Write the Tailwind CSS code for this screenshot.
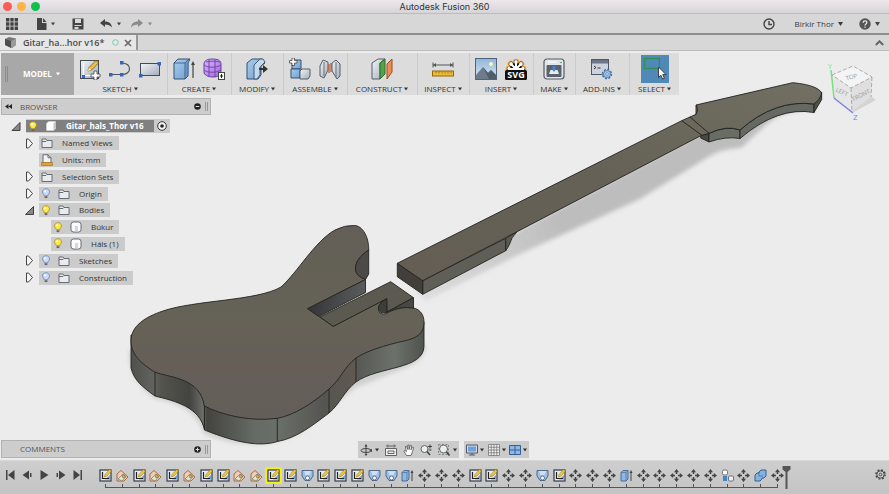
<!DOCTYPE html>
<html lang="en">
<head>
  <meta charset="UTF-8">
  <title>Autodesk Fusion 360</title>
  <script src="https://cdn.jsdelivr.net/npm/@tailwindcss/browser@4"></script>
</head>
<body class="h-screen flex flex-col overflow-hidden bg-[#ececec] font-['Open_Sans',sans-serif] text-[8px] leading-[12px] font-medium text-[#333]">

  <!-- icon sprite -->
  <svg class="absolute size-0" xmlns="http://www.w3.org/2000/svg">
    <defs>
      <linearGradient id="gBlue" x1="0" y1="0" x2="1" y2="1"><stop offset="0" stop-color="#a9cdee"/><stop offset="1" stop-color="#6f9fd0"/></linearGradient>
      <linearGradient id="gGrey" x1="0" y1="0" x2="1" y2="1"><stop offset="0" stop-color="#f2f4f7"/><stop offset="1" stop-color="#a4adbb"/></linearGradient>
      <linearGradient id="gPic" x1="0" y1="0" x2="0" y2="1"><stop offset="0" stop-color="#8fb6dc"/><stop offset="1" stop-color="#dbe8f2"/></linearGradient>
      <linearGradient id="gForm" x1="0" y1="0" x2="1" y2="1"><stop offset="0" stop-color="#dcb8fa"/><stop offset="1" stop-color="#a066dc"/></linearGradient>
    </defs>

    <symbol id="caret" viewBox="0 0 5 4"><path d="M0 0h5L2.500 4z" fill="currentColor"/></symbol>

    <symbol id="sketch" viewBox="0 0 22 22">
      <rect x="1.500" y="2.500" width="18" height="18" fill="url(#gGrey)" stroke="#444b55"/>
      <path d="M4.500 5v12.500H16" fill="none" stroke="#fff" stroke-width="1"/>
      <path d="M3 17h3v3H3z" fill="#3465c0"/>
      <path d="M9 13l1-3.500 7-7 2.500 2.500-7 7z" fill="#f3c13c" stroke="#6b551c" stroke-width=".8"/>
      <path d="M9 13l1-3 2 2z" fill="#fff"/>
      <path d="M15 13h3v3h3v3h-3v3h-3v-3h-3v-3h3z" fill="#fff" stroke="#444" stroke-width=".8"/>
    </symbol>
    <symbol id="spline" viewBox="0 0 22 22">
      <path d="M2 16.500h12M13 5c10 0 10 11.500 0 11.500" fill="none" stroke="#50555c" stroke-width="1.200"/>
      <g fill="#3465c0"><rect x="0" y="15" width="3.500" height="3.500"/><rect x="11" y="15" width="3.500" height="3.500"/><rect x="11" y="3" width="3.500" height="3.500"/></g>
    </symbol>
    <symbol id="rect" viewBox="0 0 22 22">
      <rect x="1.500" y="5.500" width="19" height="12" fill="url(#gGrey)" stroke="#444b55"/>
      <g fill="#3465c0"><rect x="0" y="16" width="3.500" height="3.500"/><rect x="18.500" y="4" width="3.500" height="3.500"/></g>
    </symbol>
    <symbol id="extrude" viewBox="0 0 22 22">
      <path d="M1 5l4-4h12l-2 4v13l-3 3H1z" fill="url(#gBlue)" stroke="#37516e"/>
      <path d="M1 5h11l4-4M12 5v16" fill="none" stroke="#37516e" stroke-width=".8"/>
      <path d="M12 5l4-3v13l-4 5z" fill="#4f80b5" fill-opacity=".5"/>
      <path d="M20 20V5" stroke="#444" stroke-width="1.200"/><path d="M18 7l2-4 2 4z" fill="#444"/>
    </symbol>
    <symbol id="form" viewBox="0 0 22 22">
      <path d="M1 6c0-3 3-5 8-5s9 1 9 5v7c0 4-3 6-8 6s-9-2-9-5z" fill="url(#gForm)" stroke="#6b3fa8"/>
      <path d="M1 7c4 3 12 3 17 0M1 12c4 3 12 3 17 0M6 1.500v16.500M12 1.500V19M3 4c4-1 10-1 14 0" fill="none" stroke="#6b3fa8" stroke-width=".9"/>
      <rect x="15.500" y="14.500" width="6" height="7" fill="#fff" stroke="#444"/><path d="M18.500 16v4M17 18h3" stroke="#222"/>
    </symbol>
    <symbol id="press" viewBox="0 0 22 22">
      <path d="M1 5l5-4h10l3 4-4 3v9l-3 4H1z" fill="url(#gBlue)" stroke="#37516e"/>
      <path d="M8 7l6-6h3l2 3-5 5v8l-3 4H8z" fill="#c5d9ec" stroke="#37516e" stroke-width=".9"/>
      <path d="M13 10h4V7l5 4-5 4v-3h-4z" fill="#333"/>
    </symbol>
    <symbol id="component" viewBox="0 0 22 22">
      <path d="M3 4l2-2h7v9H3z" fill="url(#gBlue)" stroke="#37516e"/>
      <path d="M2 11h9v9H2z" fill="url(#gBlue)" stroke="#37516e"/>
      <path d="M11 13l2-2h8v7l-2 3h-8z" fill="url(#gGrey)" stroke="#555e6b"/>
      <path d="M3 0h2.500v2.500H8V5H5.500v2.500H3V5H.500V2.500H3z" fill="#fff" stroke="#444" stroke-width=".8"/>
    </symbol>
    <symbol id="joint" viewBox="0 0 22 22">
      <path d="M1 8l3-6 5 2v8l-4 8-4-2z" fill="url(#gGrey)" stroke="#555e6b"/>
      <path d="M13 5l4-3 4 4v12l-3 3-5-8z" fill="url(#gGrey)" stroke="#555e6b"/>
      <path d="M10 6v9M12 5v9" stroke="#b4582c" stroke-width="1.200"/><path d="M5 4v14M17 4v15" stroke="#6a7380"/>
    </symbol>
    <symbol id="plane" viewBox="0 0 22 22">
      <path d="M1 5l6-4h7L9 5v16H1z" fill="url(#gGrey)" stroke="#555e6b"/>
      <path d="M9 5l5-4v15l-5 5z" fill="#4ea64a" stroke="#2d6a2c"/>
      <path d="M16 6l5-5v13l-5 7z" fill="#ee8c55" stroke="#9b4e22"/>
    </symbol>
    <symbol id="measure" viewBox="0 0 22 22">
      <path d="M1 7h20M1 4.500v5M21 4.500v5" stroke="#50555c"/><path d="M1 7l3-2v4zM21 7l-3-2v4z" fill="#50555c"/>
      <rect x=".500" y="13" width="21" height="5" fill="#eebb33" stroke="#8f6a12"/>
      <path d="M4 13v2.500M7 13v2.500M10 13v2.500M13 13v2.500M16 13v2.500M19 13v2.500" stroke="#8f6a12" stroke-width=".8"/>
    </symbol>
    <symbol id="picture" viewBox="0 0 22 22">
      <rect x=".500" y=".500" width="21" height="21" fill="url(#gPic)" stroke="#50647a"/>
      <circle cx="16" cy="6" r="2" fill="#fff6b8"/>
      <path d="M1 17l7-8 5 6 3-3 5 5v4H1z" fill="#6d7b8a"/><path d="M8 9l5 6 3-3 5 5v4h-7z" fill="#505d6b"/>
    </symbol>
    <symbol id="svglogo" viewBox="0 0 22 22">
      <g stroke="#f7a02b" stroke-width="6.500" stroke-linecap="round"><path d="M11 11V4M11 11L6 6M11 11l5-5M11 11H4M11 11h7"/></g>
      <g stroke="#111" stroke-width="4.500" stroke-linecap="round"><path d="M11 11V4M11 11L6 6M11 11l5-5M11 11H4M11 11h7"/></g>
      <g stroke="#fff" stroke-width="2" stroke-linecap="round"><path d="M11 11V4M11 11L6 6M11 11l5-5M11 11H4M11 11h7"/></g>
      <g fill="#fff"><circle cx="11" cy="4" r="1.900"/><circle cx="6" cy="6" r="1.900"/><circle cx="16" cy="6" r="1.900"/><circle cx="4" cy="10.500" r="1.700"/><circle cx="18" cy="10.500" r="1.700"/></g>
      <rect x="0" y="12" width="22" height="10" rx="1.500" fill="#111"/>
    </symbol>
    <symbol id="make" viewBox="0 0 22 22">
      <rect x="1" y="1" width="20" height="20" rx="3" fill="#e2e5e9" stroke="#555b63" stroke-width="1.200"/>
      <rect x="3.500" y="7" width="15" height="12" rx="1" fill="#5a626c"/><path d="M6 16l1.500-4h7l1.500 4z" fill="#e8ecf0"/>
      <path d="M9.500 8h3v4L11 14l-1.500-2z" fill="#3d86d6"/><path d="M5 4h9" stroke="#fff"/>
      <circle cx="18" cy="4.500" r=".8" fill="#35a050"/>
    </symbol>
    <symbol id="addins" viewBox="0 0 22 22">
      <rect x=".500" y="1.500" width="17" height="15" fill="#cdd3dd" stroke="#4e5766"/><rect x="1" y="2" width="16" height="3.500" fill="#6b7688"/>
      <path d="M3 8l2 1.500L3 11M6.500 10h3" stroke="#333" fill="none"/>
      <circle cx="16" cy="16" r="4.500" fill="#aac9ea" stroke="#3f6ea4" stroke-width="1.400" stroke-dasharray="2 1.500"/>
      <circle cx="16" cy="16" r="3.500" fill="#aac9ea" stroke="#3f6ea4" stroke-width=".8"/><circle cx="16" cy="16" r="1.300" fill="#fff" stroke="#3f6ea4" stroke-width=".7"/>
    </symbol>
    <symbol id="select" viewBox="0 0 28 28">
      <rect x="3.500" y="3.500" width="15" height="10" fill="none" stroke="#2f8f4e" stroke-width="1.200"/>
      <path d="M17.500 12v10.500l2.400-2.200 1.700 3.700 1.800-.8-1.700-3.600h3.300z" fill="#fff" stroke="#333" stroke-width=".9"/>
    </symbol>

    <symbol id="bulbOn" viewBox="0 0 10 12"><path d="M5 .800C2.500.800 1.200 2.500 1.200 4.300c0 1.800 1.800 2.500 2 4.200h3.600c.2-1.700 2-2.400 2-4.200C8.800 2.500 7.500.800 5 .800z" fill="#ffe84d" stroke="#a98d18" stroke-width=".9"/><path d="M3.500 9h3v2h-3z" fill="#666"/><circle cx="4" cy="3.500" r="1" fill="#fff"/></symbol>
    <symbol id="bulbOff" viewBox="0 0 10 12"><path d="M5 .800C2.500.800 1.200 2.500 1.200 4.300c0 1.800 1.800 2.500 2 4.200h3.600c.2-1.700 2-2.400 2-4.200C8.800 2.500 7.500.800 5 .800z" fill="#c9dcfa" stroke="#6b83b5" stroke-width=".9"/><path d="M3.500 9h3v2h-3z" fill="#666"/><circle cx="4" cy="3.500" r="1" fill="#fff"/></symbol>
    <symbol id="folder" viewBox="0 0 12 12"><path d="M1 2h4l1 1.500h5V10.500H1z" fill="#e9ebee" stroke="#5a6068" stroke-width=".9"/><path d="M1 4.500h4l1-1" fill="none" stroke="#5a6068" stroke-width=".9"/></symbol>
    <symbol id="units" viewBox="0 0 12 12"><path d="M2 .800h5l3 3V9H2z" fill="#f4f4f4" stroke="#5a6068" stroke-width=".9"/><path d="M7 .800v3h3" fill="none" stroke="#5a6068" stroke-width=".9"/><path d="M.500 8.500h11v3H.500z" fill="#e3a32e" stroke="#996a14" stroke-width=".6"/></symbol>
    <symbol id="body" viewBox="0 0 12 12"><rect x="1" y="1" width="10" height="10" rx="2.500" fill="#fbfbfc" stroke="#5a6068" stroke-width=".9"/><path d="M5 5h3v5.500H5z" fill="#d3d6dc"/></symbol>
    <symbol id="cube" viewBox="0 0 12 12"><path d="M1 3.500L3.500 1H11v7.500L8.500 11H1z" fill="#fff" stroke="#777" stroke-width=".7"/><path d="M8.500 3.500L11 1v7.500L8.500 11z" fill="#c4c6ca"/></symbol>
    <symbol id="closed" viewBox="0 0 9 11"><path d="M1.500 1h2l4 4.500-4 4.500h-2z" fill="#f6f6f6" stroke="#444"/></symbol>
    <symbol id="open" viewBox="0 0 9 11"><path d="M8.500 1.500v8h-8z" fill="#888" stroke="#333" stroke-width=".9"/></symbol>

    <symbol id="tSketch" viewBox="0 0 13 13"><rect x="1" y="1" width="11" height="11" fill="#e3ebf5" stroke="#333a45" stroke-width="1.200"/><path d="M6 10.500h5V6z" fill="#6fa2d8"/><path d="M3.500 3v6.500H10" fill="none" stroke="#222" stroke-width="1.200"/><path d="M5.500 8l.5-2.500 4.500-5L12.500 2 8 7z" fill="#f4c82e" stroke="#8a6c14" stroke-width=".5"/></symbol>
    <symbol id="tPlane" viewBox="0 0 13 13"><path d="M1 12V5l4-3.500L12 8l-4 4z" fill="#f2cdb0" stroke="#a3603c" stroke-width=".9"/><path d="M2 10l5-5 3 2.500L6 12z" fill="#dfe6d8" stroke="#6d7b62" stroke-width=".7"/><path d="M6 7l2-1.500L9.500 8 7 9z" fill="#e8b040" stroke="#555" stroke-width=".5"/></symbol>
    <symbol id="tHole" viewBox="0 0 13 13"><path d="M1 1.500h11v5.500l-3 4.500H4L1 7z" fill="#9dbfe6" stroke="#43617f" stroke-width=".9"/><path d="M3 2h7L8.500 6h-4z" fill="#cfe0f3"/><circle cx="6.500" cy="9" r="2" fill="#fff" stroke="#43617f" stroke-width=".8"/></symbol>
    <symbol id="tExtrude" viewBox="0 0 13 13"><path d="M1 3.500L3 1.500h5v8.500L6 12H1z" fill="#8db8e4" stroke="#3d6391" stroke-width=".9"/><path d="M1 3.500h5L8 1.500M6 3.500V12" fill="none" stroke="#3d6391" stroke-width=".6"/><path d="M11 12V3" stroke="#444"/><path d="M9.500 4L11 1l1.500 3z" fill="#444"/></symbol>
    <symbol id="tMove" viewBox="0 0 13 13"><path d="M6.500 2v3M6.500 8v3M2 6.500h3M8 6.500h3" stroke="#444" stroke-width="1.500"/><path d="M6.500 0L9 3.200H4zM6.500 13L9 9.800H4zM0 6.500L3.200 4v5zM13 6.500L9.800 4v5z" fill="#444"/></symbol>
    <symbol id="tJoint" viewBox="0 0 13 13"><rect x="1.500" y="1" width="5" height="5" rx="1.500" fill="#fff" stroke="#666" stroke-width=".9"/><rect x="7.500" y="7" width="5" height="5" rx="1" fill="#eee" stroke="#666" stroke-width=".9"/><rect x="2" y="7" width="4" height="5" fill="#3e86c8"/></symbol>
    <symbol id="tCombine" viewBox="0 0 13 13"><path d="M5 3l2-2h5v6l-2 2H8v1l-2 2H1V6l2-2h2z" fill="#86b2e2" stroke="#345f94"/><path d="M5 3v4h4" fill="none" stroke="#345f94" stroke-width=".6"/></symbol>
  </svg>

  <!-- title bar -->
  <header class="relative h-[14px] shrink-0 flex items-center justify-center border-b border-[#bdbabd] bg-linear-to-b from-[#ebe7eb] to-[#d8d5d8]">
    <div class="absolute left-[3px] flex gap-[5px]">
      <button aria-label="Close" class="size-[9px] rounded-full bg-[#fc5b57]"></button>
      <button aria-label="Minimize" class="size-[9px] rounded-full bg-[#fdb447]"></button>
      <button aria-label="Zoom" class="size-[9px] rounded-full bg-[#10bf4c]"></button>
    </div>
    <h1 class="font-['Inter',sans-serif] text-[9px] font-normal text-[#333]">Autodesk Fusion 360</h1>
  </header>

  <!-- quick access bar -->
  <div class="h-[21px] shrink-0 flex items-center justify-between border-b-2 border-[#8e8e8e] bg-[#d7d7d7] pl-[6px] pr-[9px] text-[#444]">
    <div class="flex items-center">
      <button aria-label="Data panel"><svg class="size-[12px]" viewBox="0 0 12 12" fill="currentColor"><path d="M0 0h3.400v3.400H0zM4.300 0h3.400v3.400H4.300zM8.600 0H12v3.400H8.600zM0 4.300h3.400v3.400H0zM4.300 4.300h3.400v3.400H4.300zM8.600 4.300H12v3.400H8.600zM0 8.600h3.400V12H0zM4.300 8.600h3.400V12H4.300zM8.600 8.600H12V12H8.600z"/></svg></button>
      <button aria-label="File" class="ml-[18px] flex items-center gap-1"><svg class="w-[11px] h-[12px]" viewBox="0 0 11 12" fill="currentColor"><path d="M1 0h5v5h4.500v7H1zM7 0l3.500 4H7z"/></svg><svg class="w-[4px] h-[4px]"><use href="#caret"/></svg></button>
      <button aria-label="Save" class="ml-[17px]"><svg class="size-[12px]" viewBox="0 0 12 12"><path d="M.500.500h11v11H.500z" fill="#444"/><path d="M3 1h6v4H3zM2.500 7h7v1h-7zM2.500 9h4v2h-4z" fill="#d7d7d7"/></svg></button>
      <button aria-label="Undo" class="ml-[16px] flex items-center gap-[5px]"><svg class="w-[12px] h-[9px]" viewBox="0 0 12 9"><path d="M5 0v2.500c4 0 6.500 2 7 6C10.500 6.500 8 5.500 5 5.500V8L0 4z" fill="#444"/></svg><svg class="w-[4px] h-[4px]"><use href="#caret"/></svg></button>
      <button aria-label="Redo" class="ml-[10px] flex items-center gap-[5px] text-[#8a8a8a]"><svg class="w-[12px] h-[9px]" viewBox="0 0 12 9"><path d="M7 0v2.500c-4 0-6.500 2-7 6C1.500 6.500 4 5.500 7 5.500V8l5-4z" fill="currentColor"/></svg><svg class="w-[4px] h-[4px]"><use href="#caret"/></svg></button>
    </div>
    <div class="flex items-center">
      <button aria-label="Job status"><svg class="size-[12px]" viewBox="0 0 12 12" fill="none" stroke="#444" stroke-width="1.400"><circle cx="6" cy="6" r="5"/><path d="M6 3v3.500h3"/></svg></button>
      <button class="ml-[20px] flex items-center gap-1 text-[#3a3a3a]">Birkir Thor <svg class="w-[5px] h-[4px]"><use href="#caret"/></svg></button>
      <button aria-label="Help" class="ml-[16px] flex items-center gap-1"><svg class="size-[12px]" viewBox="0 0 12 12"><circle cx="6" cy="6" r="5.700" fill="#555"/><path d="M4.200 4.700c0-2.400 3.700-2.300 3.700-.1C7.900 6 6 6 6 7.400M6 8.400v1.300" fill="none" stroke="#e6e6e6" stroke-width="1.300"/></svg><svg class="w-[5px] h-[4px]"><use href="#caret"/></svg></button>
    </div>
  </div>

  <!-- document tabs -->
  <div class="h-[16px] shrink-0 flex items-center justify-between border-b border-[#bcbcbc] bg-[#d7d7d7] pr-[5px]">
    <div class="h-full w-[138px] flex items-center border-r-2 border-[#999] bg-[#e6e6e6] pl-[5px]">
      <svg class="size-[11px]" viewBox="0 0 11 11"><path d="M0 2l4-2 7 1.500V8l-4 3-7-3z" fill="#777"/><path d="M0 2l6 2v7L0 8z" fill="#4e4e4e"/><path d="M6 4l5-2.500V8l-5 3z" fill="#999"/></svg>
      <span class="ml-[7px] w-[89px] text-[9px] font-semibold text-[#4a4a4a]">Gitar_ha...hor v16*</span>
      <svg class="size-[7px]" viewBox="0 0 7 7"><circle cx="3.500" cy="3.500" r="2.800" fill="none" stroke="#7cc9ae"/></svg>
      <button aria-label="Close tab" class="ml-[5px]"><svg class="size-[8px]" viewBox="0 0 8 8" stroke="#666" stroke-width="1.600"><path d="M1 1l6 6M7 1L1 7"/></svg></button>
    </div>
    <button aria-label="Collapse ribbon"><svg class="w-[9px] h-[6px]" viewBox="0 0 9 6" fill="none" stroke="#666" stroke-width="2"><path d="M.800 5l3.700-3.700L8.200 5"/></svg></button>
  </div>

  <!-- canvas -->
  <main class="relative flex-1 min-h-0 flex flex-col items-start">

    <svg class="absolute inset-0 size-full" viewBox="0 51 889 409" role="img" aria-label="Guitar body and neck">
      <defs>
        <linearGradient id="top" x1="0" y1="0" x2="0" y2="1"><stop offset="0" stop-color="#635f57"/><stop offset=".5" stop-color="#656256"/><stop offset=".75" stop-color="#655f58"/><stop offset="1" stop-color="#635e58"/></linearGradient>
        <linearGradient id="neck" x1="0" y1="1" x2="1" y2="0"><stop offset="0" stop-color="#645e55"/><stop offset=".5" stop-color="#656156"/><stop offset="1" stop-color="#717063"/></linearGradient>
        <linearGradient id="side" gradientUnits="userSpaceOnUse" x1="131" y1="0" x2="424" y2="0">
          <stop offset="0" stop-color="#50504d"/><stop offset=".08" stop-color="#62645f"/><stop offset=".1" stop-color="#55554f"/><stop offset=".2" stop-color="#43433f"/><stop offset=".245" stop-color="#6a6c66"/>
          <stop offset=".26" stop-color="#44443f"/><stop offset=".42" stop-color="#656a64"/><stop offset=".5" stop-color="#6a6f69"/><stop offset=".66" stop-color="#555550"/><stop offset=".76" stop-color="#5e5951"/><stop offset=".78" stop-color="#585a56"/><stop offset=".9" stop-color="#6c716b"/><stop offset="1" stop-color="#50524d"/>
        </linearGradient>
        <linearGradient id="pocket" x1="0" y1="0" x2="1" y2="0"><stop offset="0" stop-color="#35353a"/><stop offset="1" stop-color="#5a5c5b"/></linearGradient>
        <linearGradient id="shadow" gradientUnits="userSpaceOnUse" x1="420" y1="295" x2="560" y2="220"><stop offset="0" stop-color="#dedede"/><stop offset="1" stop-color="#bdbdbd"/></linearGradient>
        <filter id="soft" x="-5%" y="-5%" width="110%" height="110%"><feGaussianBlur stdDeviation="2"/></filter>
      </defs>

      <!-- ground shadows -->
      <path d="M412 288L426 301L520 254L640 199L700 162Q722 147 741 148Q756 133 772 120Q790 108 815 110L815 100L700 134L516 232L423 292z" fill="url(#shadow)" filter="url(#soft)"/>
      <path d="M129 350Q128 380 155 399Q195 405 204 434Q255 455 300 433L355 388L410 366Q424 360 426 345z" fill="#cfcfcf" filter="url(#soft)"/>

      <!-- body -->
      <g stroke="#22221f" stroke-width=".9" stroke-linejoin="round">
        <path d="M131 335V368C134 381 144 388 155 396C175 401 200 407 204.500 430C237 443 260 447 277.500 441.500C297 438 313 425 329 413C340 404 344 391 356 382C378 366 424 370 424 346V322z" fill="url(#side)"/>
        <path d="M353.500 225.500C363 225 369 238 368.700 250C360 256 355 262 355.500 270Q358 276 365.500 279.500L307.700 308.700L333.300 326.300L386.500 298.700Q376 306 379 312Q383 316 388 312.500Q400 306.500 408 307.500C420 307 424 315 424 322C424 333 418 338 404 341C386 345 366 351 356 358C344 367 341 379 329 389C312 404 294 415 277.500 418.300C250 422 222 415 204.300 406C200 378 172 378 155 372.300C142 364 131 355 131 341C131 326 145 317 163 311C195 300 257 301 281 287C297 273 315 241 335 230Q345 225 353.500 225.500z" fill="url(#top)"/>
        <path d="M155 372v24M204.500 406v24M277.300 418v23.500M329 389v24M356 358v24" fill="none"/>
        <path d="M368.700 250V274L365.500 279.500Q356 276 355.500 270C355 262 360 256 368.700 250z" fill="#4b4a46"/>
        <path d="M365.500 279.500V292.500L319 316.500L307.700 308.700z" fill="url(#pocket)"/>
        <path d="M320 317L390.700 281.700L413.500 297.700L387 312L386.700 298.700L333.300 326.300z" fill="#5c5a50"/>
        <path d="M387 312L413.500 297.700V308Q400 306 387 312z" fill="#4a4842"/>
        <path d="M386.700 298.700V313Q377 314 378.700 306Q381 301 386.700 298.700z" fill="#3d3d3a"/>
      </g>

      <!-- neck -->
      <g stroke="#22221f" stroke-width=".9" stroke-linejoin="round">
        <path d="M422.700 280.700L505.700 238.300V250.700L422.700 294.300z" fill="#5f5f58"/>
        <path d="M505.700 238.300L517 231.700Q511 238 510 243Q508 248 505.700 250.700z" fill="#5a5a52"/>
        <path d="M397.300 263.300L422.700 280.700V294.300L397.300 276.700z" fill="#423f3a"/>
        <path d="M700.700 135.700L709 133.300V142L700.700 138z" fill="#484843"/>
        <path d="M709 133.300Q727 125 740 130V138.500Q726 136 709 142z" fill="#6a6d66"/>
        <path d="M740 130Q775 99 814 104V112.500Q778 106 740 138.500z" fill="#666862"/>
        <path d="M814 104L821.700 92V99.500L814 112.500z" fill="#4f4f49"/>
        <path d="M397.300 263.300L681.700 120.700L696 114.300V105L792.700 82.700Q807 84 815 87.500Q822 91 821.500 94Q820 100 814 104Q775 99 740 130Q727 125 709 133.300L700.700 135.700L517 231.700L422.700 280.700z" fill="url(#neck)"/>
        <path d="M681.700 120.700L702 135.300M690 117L709 133.300M696.500 105Q699 110 696 114.300" fill="none"/>
      </g>
    </svg>

    <!-- view cube -->
    <svg class="absolute right-[9px] top-[9px] w-[56px] h-[62px]" viewBox="824 60 56 62" font-family="Open Sans" role="img" aria-label="View cube">
      <path d="M834 99L852 113L876 100L868 94z" fill="#d4d4d4"/>
      <path d="M832 75L853 66L872 77L851 88z" fill="#f4f4f4"/><path d="M832 75L851 88L852 111L834 98z" fill="#e6e6e6"/><path d="M851 88L872 77L871 97L852 111z" fill="#dfdfdf"/>
      <path d="M832 75L853 66L872 77L851 88zM851 88L852 111M872 77L871 97" fill="none" stroke="#a5a5a5" stroke-width=".9" stroke-dasharray="4 2"/>
      <path d="M831 70L834 98" stroke="#74e37c" stroke-width="1.500"/><path d="M834 98L853 113" stroke="#7f7fe6" stroke-width="1.300"/>
      <text x="828" y="69" font-size="7" fill="#74e37c">Y</text><text x="853" y="120" font-size="8" fill="#7f7fe6">Z</text>
      <g fill="#999" font-size="6" text-anchor="middle"><text x="852" y="79" transform="rotate(-14 852 79)">TOP</text><text x="841" y="94" transform="rotate(25 841 94)">LEFT</text><text x="862" y="97" transform="rotate(-28 862 97)">FRONT</text></g>
    </svg>

    <!-- ribbon -->
    <nav class="relative mt-[2px] ml-[1px] h-[42px] flex bg-[#dcdcdc]">
      <button class="w-[73px] flex items-center bg-[#a8a8a8] pl-[4px] font-bold text-white">
        <span class="h-[16px] w-[3px] border-x border-[#8b8b8b]"></span>
        <span class="ml-[15px]">MODEL</span>
        <svg class="ml-1 w-[4px] h-[4px]"><use href="#caret"/></svg>
      </button>
      <div id="ribbon" class="flex"></div>
    </nav>

    <!-- browser -->
    <section class="relative mt-[3px] w-[211px] pl-[1px]">
      <h2 class="h-[17px] flex items-center border border-[#b2b2b2] bg-[#cdcdcd] pl-[3px] pr-[2px] text-[#555]">
        <button aria-label="Collapse browser"><svg class="w-[7px] h-[5px]" viewBox="0 0 7 5"><path d="M3.500 0v5L0 2.500zM7 0v5L3.500 2.500z" fill="#222"/></svg></button>
        <span class="ml-[8px] flex-1">BROWSER</span>
        <svg class="size-[7px]" viewBox="0 0 7 7"><circle cx="3.500" cy="3.500" r="3.300" fill="#222"/><path d="M1.700 3.500h3.600" stroke="#ddd"/></svg>
        <span class="ml-[4px] h-[9px] w-[3px] border-x border-[#999]"></span>
      </h2>
      <ul id="tree" class="mt-[3px] h-[168px] grid grid-rows-10 items-center"></ul>
    </section>

    <!-- bottom panels -->
    <section class="relative mt-auto mb-[2px] w-full flex items-end">
      <div class="w-[211px] pl-[1px]">
        <h2 class="h-[18px] flex items-center border border-[#b2b2b2] bg-[#cdcdcd] pl-[18px] pr-[2px] text-[#555]">
          <span class="flex-1">COMMENTS</span>
          <button aria-label="Add comment"><svg class="size-[7px]" viewBox="0 0 7 7"><circle cx="3.500" cy="3.500" r="3.300" fill="#222"/><path d="M1.700 3.500h3.600M3.500 1.700v3.600" stroke="#ddd"/></svg></button>
          <span class="ml-[4px] h-[9px] w-[3px] border-x border-[#999]"></span>
        </h2>
      </div>
      <div class="ml-[147px] h-[17px] w-[101px] flex items-center justify-between bg-[#cbcbcb] px-[2px] text-[#333]">
        <button aria-label="Orbit" class="flex items-center gap-[3px]"><svg class="size-[12px]" viewBox="0 0 12 12" fill="none" stroke="#444"><path d="M6 1v10"/><ellipse cx="6" cy="6.500" rx="5" ry="2"/><path d="M6 0l1.500 2.500h-3zM6 12l1.500-2h-3zM9 6l3-1v3z" fill="#444" stroke="none"/></svg><svg class="w-[4px] h-[4px]"><use href="#caret"/></svg></button>
        <button aria-label="Look at"><svg class="size-[12px]" viewBox="0 0 12 12" fill="none" stroke="#555"><path d="M.500 4.500h11v7H.500zM3 7h6v2.500H3z" fill="#eee" stroke-width=".9"/><path d="M2 2h8M3 .500L1.500 2 3 3.500M9 .500L10.500 2 9 3.500" stroke-width=".9"/></svg></button>
        <button aria-label="Pan"><svg class="size-[12px]" viewBox="0 0 12 12"><path d="M3.500 11.500L.800 7l1-.8 1.700 1.500L2.300 2.500l1.200-.3 1.300 3.300V1h1.300v4.500L7.300 1.300l1.200.3-.5 4.200 1.500-2.800 1.200.5L9 9l-1 2.500z" fill="#fff" stroke="#555" stroke-width=".8"/></svg></button>
        <button aria-label="Zoom"><svg class="size-[12px]" viewBox="0 0 12 12"><circle cx="4.500" cy="5" r="3.500" fill="#e8f0f0" stroke="#666"/><path d="M7 7.500l3 3.500" stroke="#444" stroke-width="1.600"/><path d="M8 2.500h4M10 .500v4M8.500 6h3" stroke="#333" stroke-width=".9"/></svg></button>
        <button aria-label="Fit" class="flex items-center gap-[3px]"><svg class="size-[12px]" viewBox="0 0 12 12"><path d="M.500.500h10v10H.500z" fill="none" stroke="#888" stroke-dasharray="2 1.500"/><circle cx="5.500" cy="5" r="4" fill="#e8f0f0" stroke="#666"/><path d="M8.500 8l3 3.500" stroke="#444" stroke-width="1.600"/></svg><svg class="w-[4px] h-[4px]"><use href="#caret"/></svg></button>
      </div>
      <div class="ml-[5px] h-[17px] w-[65px] flex items-center justify-between bg-[#cbcbcb] px-[2px] text-[#333]">
        <button aria-label="Display settings" class="flex items-center gap-[2px]"><svg class="size-[12px]" viewBox="0 0 12 12"><path d="M.500 1h11v8H.500z" fill="#d5dce6" stroke="#556"/><path d="M2 2.500h8v5H2z" fill="#6fa2dc"/><path d="M3 11h6M6 9v2" stroke="#556"/></svg><svg class="w-[4px] h-[4px]"><use href="#caret"/></svg></button>
        <button aria-label="Grid" class="flex items-center gap-[2px]"><svg class="size-[12px]" viewBox="0 0 12 12"><path d="M.500.500h11v11H.500z" fill="#f2f2f2"/><path d="M.500.500h11v11H.500zM.500 3.250h11M.500 6h11M.500 8.750h11M3.250.500v11M6 .500v11M8.750.500v11" fill="none" stroke="#777" stroke-width=".8"/></svg><svg class="w-[4px] h-[4px]"><use href="#caret"/></svg></button>
        <button aria-label="Viewports" class="flex items-center gap-[2px]"><svg class="size-[12px]" viewBox="0 0 12 12"><path d="M.500 1.500h11v9H.500z" fill="#8fb8e6" stroke="#345f94"/><path d="M6 1v10M0 6h12" stroke="#345f94"/></svg><svg class="w-[4px] h-[4px]"><use href="#caret"/></svg></button>
      </div>
    </section>
  </main>

  <!-- timeline -->
  <footer class="h-[34px] shrink-0 flex items-center border-t border-[#d8d8d8] bg-linear-to-b from-[#cecece] to-[#c4c4c4] pl-[5px] pr-[3px]">
    <div class="w-[92px] flex gap-[7px] pb-[5px]">
      <button aria-label="First"><svg class="size-[10px]" viewBox="0 0 10 10" fill="#444"><path d="M1 0h1.500v10H1zM9.500 0v10L3 5z"/></svg></button>
      <button aria-label="Step back"><svg class="size-[10px]" viewBox="0 0 10 10" fill="#444"><path d="M7 .500v9L.500 5zM8 3h1.500v4H8z"/></svg></button>
      <button aria-label="Play"><svg class="size-[10px]" viewBox="0 0 10 10" fill="#444"><path d="M1.500 0v10L9.500 5z"/></svg></button>
      <button aria-label="Step forward"><svg class="size-[10px]" viewBox="0 0 10 10" fill="#444"><path d="M3 .500v9L9.500 5zM.500 3H2v4H.500z"/></svg></button>
      <button aria-label="Last"><svg class="size-[10px]" viewBox="0 0 10 10" fill="#444"><path d="M7.500 0H9v10H7.500zM.500 0v10L7 5z"/></svg></button>
    </div>
    <div id="timeline" class="w-[689px] h-full grid grid-cols-41 pt-[6px]"></div>
    <svg class="-ml-[4px] w-[9px] h-[23px]" viewBox="0 0 9 23"><path d="M.500 0h8v3.500L5.500 6v17h-2V6L.500 3.500z" fill="#555"/></svg>
    <button aria-label="Timeline settings" class="ml-auto pb-[6px]"><svg class="size-[11px]" viewBox="0 0 12 12"><circle cx="6" cy="6" r="5" fill="none" stroke="#444" stroke-width="1.600" stroke-dasharray="2 1.930"/><circle cx="6" cy="6" r="4" fill="none" stroke="#444"/><circle cx="6" cy="6" r="1.500" fill="none" stroke="#444"/></svg></button>
  </footer>

  <script>
    const groups = [
      ['SKETCH', 'w-[94px]', ['sketch', 'spline', 'rect']],
      ['CREATE', 'w-[64px]', ['extrude', 'form']],
      ['MODIFY', 'w-[52px]', ['press']],
      ['ASSEMBLE', 'w-[64px]', ['component', 'joint']],
      ['CONSTRUCT', 'w-[70px]', ['plane']],
      ['INSPECT', 'w-[52px]', ['measure']],
      ['INSERT', 'w-[64px]', ['picture', 'svglogo']],
      ['MAKE', 'w-[42px]', ['make']],
      ['ADD-INS', 'w-[54px]', ['addins']],
      ['SELECT', 'w-[49px]', ['select']],
    ];
    const captions = {
      svglogo: '<text x="11" y="20" text-anchor="middle" fill="#fff" font-weight="700" font-size="9">SVG</text>',
    };

    document.getElementById('ribbon').innerHTML = groups.map(([name, width, icons]) => `
      <div class="${width} flex flex-col items-center border-r border-[#cacaca] pt-[2px] pr-[1px] last:border-r-0 last:pr-0">
        <div class="h-[28px] flex items-center gap-[8px]">
          ${icons.map((i) => i === 'select'
            ? `<button aria-label="${i}" class="bg-[#5088b8]"><svg class="size-[28px]"><use href="#${i}"/></svg></button>`
            : `<button aria-label="${i}"><svg class="size-[22px]"><use href="#${i}"/>${captions[i] || ''}</svg></button>`).join('')}
        </div>
        <button class="h-[12px] flex items-center gap-[2px]">${name}<svg class="w-[4px] h-[4px]"><use href="#caret"/></svg></button>
      </div>`).join('');

    // label, indent, arrow, bulb, icon
    const tree = [
      ['Named Views', 'pl-[24px]', 'closed', '', 'folder'],
      ['Units: mm', 'pl-[24px]', '', '', 'units'],
      ['Selection Sets', 'pl-[24px]', 'closed', '', 'folder'],
      ['Origin', 'pl-[24px]', 'closed', 'bulbOff', 'folder'],
      ['Bodies', 'pl-[24px]', 'open', 'bulbOn', 'folder'],
      ['Búkur', 'pl-[36px]', '', 'bulbOn', 'body'],
      ['Háls (1)', 'pl-[36px]', '', 'bulbOn', 'body'],
      ['Sketches', 'pl-[24px]', 'closed', 'bulbOff', 'folder'],
      ['Construction', 'pl-[24px]', 'closed', 'bulbOff', 'folder'],
    ];

    document.getElementById('tree').innerHTML = `
      <li class="flex items-center pl-[10px]">
        <svg class="w-[10px] h-[11px]"><use href="#open"/></svg>
        <div class="ml-[5px] h-[14px] flex items-center bg-[#cbcbcb]">
          <div class="h-[12px] w-[128px] flex items-center bg-[#808080] pl-[2px] font-bold text-white">
            <svg class="w-[10px] h-[11px]"><use href="#bulbOn"/></svg>
            <svg class="ml-[7px] size-[12px]"><use href="#cube"/></svg>
            <span class="ml-[9px] whitespace-nowrap">Gitar_hals_Thor v16</span>
          </div>
          <svg class="mx-[3px] size-[10px]" viewBox="0 0 10 10"><circle cx="5" cy="5" r="4.300" fill="#f4f4f4" stroke="#333"/><circle cx="5" cy="5" r="1.800" fill="#222"/></svg>
        </div>
      </li>` + tree.map(([label, indent, arrow, bulb, icon]) => `
      <li class="flex items-center ${indent}">
        <span class="w-[14px]">${arrow ? `<svg class="w-[9px] h-[11px]"><use href="#${arrow}"/></svg>` : ''}</span>
        <div class="h-[14px] flex items-center bg-[#cbcbcb] pl-[2px] pr-[6px]">
          ${bulb ? `<svg class="mr-[7px] w-[10px] h-[11px]"><use href="#${bulb}"/></svg>` : ''}
          <svg class="size-[12px]"><use href="#${icon}"/></svg>
          <span class="ml-[9px]">${label}</span>
        </div>
      </li>`).join('');

    const steps = 'S P S P S P S S P P S S H S S S H H E M M M S S M M H S M M M E M M M M M J M C M'.split(' ');
    const stepIcons = { S: 'tSketch', P: 'tPlane', H: 'tHole', E: 'tExtrude', M: 'tMove', J: 'tJoint', C: 'tCombine' };
    const current = 10;

    document.getElementById('timeline').innerHTML = steps.map((s, i) => `
      <div class="group flex flex-col items-center">
        <button aria-label="Step ${i + 1}" class="p-[2px] ${i === current ? 'bg-[#f2ee1c]' : ''}"><svg class="size-[13px]"><use href="#${stepIcons[s]}"/></svg></button>
        <span class="h-[3px] w-px bg-[#555]"></span>
        <span class="h-px w-full bg-[#555] group-first:w-1/2 group-first:self-end group-last:w-1/2 group-last:self-start"></span>
      </div>`).join('');
  </script>
</body>
</html>
